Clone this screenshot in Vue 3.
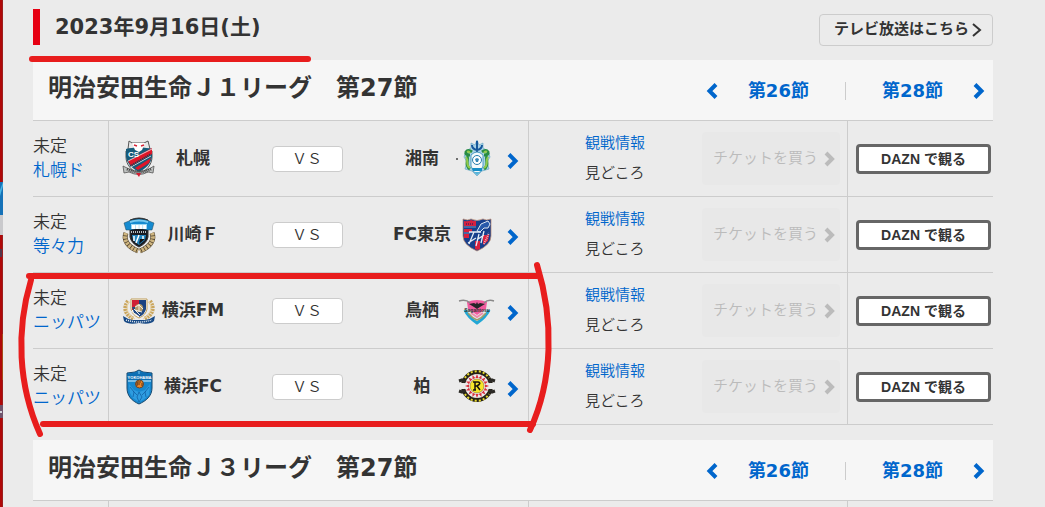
<script setup>
const matches = [
  { stadium: '札幌ド', home: '札幌', away: '湘南', homeCrest: 'sapporo', awayCrest: 'shonan' },
  { stadium: '等々力', home: '川崎Ｆ', away: 'FC東京', homeCrest: 'kawasaki', awayCrest: 'tokyo' },
  { stadium: 'ニッパツ', home: '横浜FM', away: '鳥栖', homeCrest: 'marinos', awayCrest: 'tosu' },
  { stadium: 'ニッパツ', home: '横浜FC', away: '柏', homeCrest: 'yokohamafc', awayCrest: 'kashiwa' }
]
const leagues = [
  { title: '明治安田生命Ｊ１リーグ　第27節', matches },
  { title: '明治安田生命Ｊ３リーグ　第27節', matches: [] }
]
const rays = Array.from({ length: 16 }, (_, i) => i * 22.5)
</script>

<template>
  <div class="page">
    <svg class="edge" width="3" height="507" aria-hidden="true">
      <rect width="3" height="507" fill="#9b1f1f" />
      <rect width="2" height="507" fill="#b00808" />
      <rect y="182" width="3" height="33" fill="#1672b8" />
      <path d="M0 190 3 182V186L0 196Z" fill="#48b4e4" />
      <rect y="215" width="3" height="20" fill="#c9c9cc" />
      <rect y="249" width="2" height="8" fill="#54354a" />
      <rect x="2" y="334" width="1" height="46" fill="#a34a18" />
      <rect y="405" width="3" height="13" fill="#70556d" />
      <rect y="411" width="2" height="2" fill="#d5d5de" />
    </svg>

    <main class="content">
      <header class="day">
        <h1>2023年9月16日(土)</h1>
        <a class="tv" href="#tv">
          <span>テレビ放送はこちら</span>
          <svg width="11" height="16" viewBox="0 0 11 16" aria-hidden="true"><path d="M2 2 9 8 2 14" fill="none" stroke="currentColor" stroke-width="2" /></svg>
        </a>
      </header>

      <section v-for="league in leagues" :key="league.title" class="league">
        <div class="bar">
          <h2>{{ league.title }}</h2>
          <nav>
            <a class="prev" href="#26">
              <svg width="12" height="16" viewBox="0 0 12 16" aria-hidden="true"><path d="M10 1.500 3.500 8 10 14.500" fill="none" stroke="currentColor" stroke-width="4" /></svg>
              <span>第26節</span>
            </a>
            <a class="next" href="#28">
              <span>第28節</span>
              <svg width="12" height="16" viewBox="0 0 12 16" aria-hidden="true"><path d="M2 1.500 8.500 8 2 14.500" fill="none" stroke="currentColor" stroke-width="4" /></svg>
            </a>
          </nav>
        </div>

        <table>
          <colgroup><col class="c-place" /><col /><col class="c-info" /><col class="c-dazn" /></colgroup>
          <tbody>
            <tr v-for="m in league.matches" :key="m.home">
              <td class="place">未定<br /><a href="#stadium">{{ m.stadium }}</a></td>
              <td>
                <div class="match">
                  <template v-for="side in ['home', 'away']" :key="side">
                    <svg class="crest" :class="side" width="36" height="38" viewBox="0 0 36 38" aria-hidden="true">
                      <g v-if="m[side + 'Crest'] === 'sapporo'">
                        <path d="M8 1 11 3H23L27 1 29 9 31 11V17C31 25 25 31 18 34C11 31 5 25 5 17V11L7 9Z" fill="#e7e9e9" stroke="#555" />
                        <path d="M5 9C11 7 25 7 31 9V17C30 23 26 28 18 32C10 28 6 23 5 17Z" fill="#175b79" />
                        <path d="M11 3H24L21 10 18 12 14 10Z" fill="#fff" />
                        <path d="M13 5 16 6M23 5 20 6" stroke="#d82436" stroke-width="1.500" />
                        <path d="M31 8V14L10 26 7 21Z" fill="#df1628" />
                        <path d="M30 18 28 23 17 30 14 28Z" fill="#df1628" />
                        <path d="M7 21 31 9M10 27 30 16" stroke="#e8eef0" stroke-width="0.800" />
                        <path d="M9 26 30 14" stroke="#1a4153" stroke-width="2" stroke-dasharray="1 1" />
                        <text x="7" y="17" font-size="8" font-weight="700" font-family="Liberation Sans, sans-serif" fill="#fff">CS</text>
                        <path d="M2 26 8 29Q18 34 28 29L33 26 32 33 27 32Q18 37 8 32L3 33Z" fill="#bfc2c1" stroke="#555" stroke-width="0.800" />
                        <path d="M6 29Q18 35 30 29" fill="none" stroke="#424242" stroke-width="3" stroke-dasharray="1 1" />
                        <path d="M15 33H20L18 37Z" fill="#d61c31" />
                      </g>
                      <g v-else-if="m[side + 'Crest'] === 'kawasaki'">
                        <path d="M5 17C2 24 7 31 17 35M31 17C34 24 29 31 19 35" fill="none" stroke="#4d402c" stroke-width="5" />
                        <path d="M5 17C2 24 7 31 17 35M31 17C34 24 29 31 19 35" fill="none" stroke="#ceb580" stroke-width="4" stroke-dasharray="2.500 0.800" />
                        <path d="M9 4Q18 0 27 4V21Q26 27 18 31Q10 27 9 21Z" fill="#191b22" stroke="#333" />
                        <path d="M3 7 8 5Q18 1 28 5L33 7 31 14H26L18 12 10 14H5Z" fill="#168bd0" stroke="#204455" stroke-width="0.500" />
                        <path d="M9 6Q18 3 27 6" fill="none" stroke="#79c9ee" stroke-width="2" />
                        <path d="M10 8H26V13H10Z" fill="#9bd7f2" /><path d="M11 11H25" stroke="#fff" stroke-width="4" stroke-dasharray="3 0.700" />
                        <path d="M10 16H26" stroke="#b7bec2" stroke-width="2" stroke-dasharray="1 1" />
                        <path d="M11 19H25L24 24 18 29 12 24Z" fill="#2385bf" />
                        <path d="M13 20V25M18 19 15 27M22 20V23" stroke="#fff" stroke-width="1.500" />
                        <path d="M19 23H24L18 28Z" fill="#111" />
                      </g>
                      <g v-else-if="m[side + 'Crest'] === 'marinos'">
                        <path d="M7 9C2 16 4 23 13 27M29 9C34 16 32 23 23 27" fill="none" stroke="#caa65e" stroke-width="4" stroke-dasharray="2 0.800" />
                        <path d="M8 9C4 17 7 23 14 27M28 9C32 17 29 23 22 27" fill="none" stroke="#ead5a5" stroke-width="1" />
                        <path d="M10 7H26V17Q25 23 18 26Q11 23 10 17Z" fill="#fff" stroke="#be9d58" stroke-width="1" />
                        <path d="M11 8H18V17L11 18Z" fill="#cf2036" /><path d="M18 8H25V17Q24 22 18 25Z" fill="#194282" />
                        <path d="M11 15H25L22 22 18 24 13 21Z" fill="#234b83" />
                        <circle cx="18" cy="16" r="4" fill="#b49c6b" /><path d="M14 15 18 13 22 17M18 12V20M14 18 21 20" stroke="#f5eee1" fill="none" />
                        <path d="M10 19 17 24M13 17 19 23" stroke="#eee" stroke-width="1" />
                        <path d="M2 24Q6 27 12 28H24Q30 27 34 24L33 29Q29 33 18 31Q7 33 3 29Z" fill="#174985" />
                        <path d="M5 28Q18 32 31 28" stroke="#e7edf2" stroke-width="1.500" stroke-dasharray="1 1" fill="none" />
                      </g>
                      <g v-else-if="m[side + 'Crest'] === 'yokohamafc'">
                        <path d="M6 5 14 4 18 2 22 4 31 5V20C31 28 25 33 18 36C11 33 6 28 6 20Z" fill="#1688cf" stroke="#16476d" />
                        <path d="M7 6Q18 2 30 6V12H7Z" fill="#0c6fb4" /><path d="M18 3V6" stroke="#86c8f0" />
                        <text x="18.500" y="11" text-anchor="middle" font-size="4" font-weight="700" font-family="Liberation Sans, sans-serif" fill="#fff">YOKOHAMA</text>
                        <path d="M7 13H30" stroke="#d8f1ff" />
                        <path d="M8 16 13 22 18 24 24 22 29 16 28 27 22 32 18 34 12 30 9 25Z" fill="#2e9ce0" />
                        <path d="M9 19 13 24 12 29M28 19 24 24 25 29M18 24 16 29 18 34 21 29ZM25 23 21 27M12 23 16 27" fill="none" stroke="#1262a6" stroke-width="0.800" />
                        <circle cx="18.500" cy="16" r="4" fill="#ee8524" stroke="#62432c" /><path d="M16 14H20M16 14V18M16 16H19M21 15V18" stroke="#5c3821" fill="none" />
                      </g>
                      <g v-else-if="m[side + 'Crest'] === 'shonan'">
                        <circle cx="-2" cy="19" r="1" fill="#444" />
                        <path d="M18 0 20 5 24 3 24 8 29 11 31 17 28 22 30 29 23 31 18 36 13 31 6 29 8 22 5 17 7 11 12 8V3L16 5Z" fill="#a9d2e6" stroke="#6aa9c7" stroke-width="0.700" />
                        <path d="M18 1V12M13 5Q13 9 18 10Q23 9 23 5" fill="none" stroke="#15589b" stroke-width="2" />
                        <path d="M11 15Q6 15 7 12Q9 9 13 12M25 15Q30 15 29 12Q27 9 23 12M8 16C10 20 5 25 11 29M28 16C26 20 31 25 25 29" fill="none" stroke="#278c44" stroke-width="3" />
                        <path d="M8 12Q10 11 11 13M28 12Q26 11 25 13M7 17C10 21 6 25 11 28M29 17C26 21 30 25 25 28" fill="none" stroke="#91c94b" stroke-width="2" />
                        <path d="M12 15Q18 9 24 15V26Q22 33 18 34Q14 33 12 26Z" fill="#f4fafc" stroke="#4d9bc2" />
                        <circle cx="18" cy="20" r="4.500" fill="#fff" stroke="#267dac" /><path d="M18 18 20 19 19 22H17L16 19Z" fill="#3487b6" />
                        <path d="M13 28H23V31H14Z" fill="#168ec6" /><path d="M15 32H21L18 35Z" fill="#55b5dc" />
                      </g>
                      <g v-else-if="m[side + 'Crest'] === 'tokyo'">
                        <path d="M4 3Q9 5 12 3Q18 6 24 3Q27 5 32 3V20Q32 29 18 35Q4 29 4 20Z" fill="#173f8c" stroke="#b7856d" stroke-width="0.700" />
                        <path d="M5 5Q9 6 12 4Q14 5 17 5V10H5ZM5 13H13V16H5ZM5 18H10V22H5ZM16 25H21V33L18 34 16 33ZM24 19H30L29 25 24 29Z" fill="#d7213f" />
                        <path d="M7 8H15" stroke="#701d55" stroke-width="2" stroke-dasharray="1 1" />
                        <path d="M5 11H17M5 17H11" stroke="#dce5f2" stroke-width="0.500" />
                        <path d="M18 15 22 8 29 5 31 8 29 12H25L21 16Z" fill="#285aaa" stroke="#dce7f2" />
                        <path d="M10 16H22M15 16 10 28M9 27 17 22M20 18 17 30M19 23 25 19M25 15 22 27" fill="none" stroke="#e5edf6" stroke-width="1.300" />
                        <path d="M25 28 30 17" stroke="#f3b2bd" stroke-width="2" stroke-dasharray="1 1" />
                      </g>
                      <g v-else-if="m[side + 'Crest'] === 'tosu'">
                        <path d="M4 11Q18 4 32 11 30 21 25 26L18 32 11 26Q6 21 4 11Z" fill="#e6e9e7" />
                        <path d="M6 18Q9 25 18 31Q27 25 30 18" fill="none" stroke="#22a7d5" stroke-width="3" />
                        <path d="M8 10Q18 6 28 10L27 17 18 23 9 17Z" fill="#f15b9e" />
                        <path d="M9 21Q13 26 18 28Q23 26 27 21" fill="none" stroke="#a09b69" stroke-width="1.500" />
                        <path d="M12 21 18 25 24 21" fill="none" stroke="#ef89ae" stroke-width="2" />
                        <path d="M0 9Q7 7 11 11M25 11Q29 7 35 9" fill="none" stroke="#898989" stroke-width="1.500" />
                        <path d="M10 12 15 11 17 12 18 10 19 12 21 11 26 12 21 15 18 17 15 15Z" fill="#272529" />
                        <text x="18" y="20" text-anchor="middle" font-size="5" font-weight="700" font-family="Liberation Sans, sans-serif" fill="#333">Sagantosu</text>
                      </g>
                      <g v-else>
                        <circle cx="18" cy="18" r="14" fill="none" stroke="#252217" stroke-width="4" />
                        <path d="M6 10A14 14 0 0 1 30 10M6 26A14 14 0 0 0 30 26" fill="none" stroke="#e5d72f" stroke-width="2" stroke-dasharray="2 2" />
                        <path d="M0 15H36V21H0Z" fill="#ebebeb" />
                        <g fill="#d72f3b"><path v-for="angle in rays" :key="angle" d="M16.500 10 18 6 19.500 10Z" :transform="`rotate(${angle} 18 18)`" /></g>
                        <circle cx="18" cy="18" r="7" fill="#f5e629" stroke="#76501f" stroke-width="0.500" />
                        <path d="M14 14H19Q23 15 18 18L21 22M16 14V22M14 22H17M16 18H18" fill="none" stroke="#17140b" stroke-width="1.500" />
                        <path d="M0 13 3 12 6 14M0 23 3 24 6 22M36 13 33 12 30 14M36 23 33 24 30 22" fill="none" stroke="#2b2925" stroke-width="3" />
                      </g>
                    </svg>
                    <strong class="team" :class="side">{{ m[side] }}</strong>
                  </template>
                  <button class="vs" type="button">ＶＳ</button>
                  <a class="more" href="#match" aria-label="試合詳細">
                    <svg width="12" height="16" viewBox="0 0 12 16" aria-hidden="true"><path d="M2 1.500 8.500 8 2 14.500" fill="none" stroke="currentColor" stroke-width="4" /></svg>
                  </a>
                </div>
              </td>
              <td>
                <div class="info">
                  <div class="links"><a href="#info">観戦情報</a><span>見どころ</span></div>
                  <button class="ticket" type="button" disabled>
                    <span>チケットを買う</span>
                    <svg width="11" height="16" viewBox="0 0 11 16" aria-hidden="true"><path d="M2 2 8 8 2 14" fill="none" stroke="currentColor" stroke-width="4" /></svg>
                  </button>
                </div>
              </td>
              <td class="watch"><button class="dazn" type="button">DAZN で観る</button></td>
            </tr>
            <tr v-if="!league.matches.length" class="blank"><td></td><td></td><td></td><td></td></tr>
          </tbody>
        </table>
      </section>
    </main>

    <svg class="marks" width="560" height="440" viewBox="0 0 560 440" aria-hidden="true">
      <g fill="none" stroke="#e81d1d" stroke-width="6" stroke-linecap="round" stroke-linejoin="round">
        <path d="M32 59H308" />
        <path d="M29 276H537" />
        <path d="M31 280C16 330 18 385 40 434" />
        <path d="M43 424H533" />
        <path d="M537 265C554 320 553 380 530 430" />
      </g>
    </svg>
  </div>
</template>

<style>
body { margin: 0; background: #ebebeb; }
</style>

<style scoped>
.page {
  position: relative;
  overflow: hidden;
  color: #333;
  font-family: "DejaVu Sans", "Noto Sans CJK JP", sans-serif;
  font-weight: 350;
}
.edge { position: absolute; left: 0; top: 0; }
.marks { position: absolute; left: 0; top: 0; pointer-events: none; }
.content { padding: 9px 52px 0 33px; }
a { color: #06c; text-decoration: none; }
button { box-sizing: border-box; padding: 0; color: inherit; font-family: inherit; font-weight: inherit; }
h1, h2 { margin: 0; font-weight: 700; }
.day { display: flex; justify-content: space-between; align-items: flex-start; margin-bottom: 14px; }
h1 { border-left: 7px solid #e60012; padding-left: 15px; font-size: 21px; line-height: 36px; }
.tv {
  display: flex;
  align-items: center;
  gap: 2px;
  margin-top: 5px;
  padding: 0 10px 0 14px;
  border: 1px solid #ccc;
  border-radius: 4px;
  color: #333;
  font-size: 15px;
  font-weight: 700;
}
.tv span { line-height: 28px; padding-bottom: 2px; }
.league { margin-bottom: 15px; }
.league:last-child { margin-bottom: 0; }
.bar {
  display: flex;
  justify-content: space-between;
  padding: 0 8px 0 15px;
  background: #f6f6f6;
  border-bottom: 1px solid #ccc;
}
h2 { font-size: 24px; line-height: 56px; }
nav { display: flex; align-items: center; padding-top: 2px; font-size: 18px; font-weight: 700; line-height: 58px; }
nav a { display: flex; align-items: center; }
.prev { gap: 30px; }
.prev::after { content: ""; width: 1px; height: 18px; margin-left: 6px; background: #ccc; }
.next { gap: 30px; padding-left: 36px; }
table { width: 100%; table-layout: fixed; border-spacing: 0; }
.c-place { width: 76px; }
.c-info { width: 319px; }
.c-dazn { width: 145px; }
td { box-sizing: border-box; height: 76px; padding: 0; border-right: 1px solid #ccc; border-bottom: 1px solid #ccc; }
td:last-child { border-right: 0; }
.blank td { height: 6px; border-bottom: 0; }
.place { padding-bottom: 2px; font-size: 17px; line-height: 24px; white-space: nowrap; }
.match {
  display: grid;
  grid-template-columns: 36px 72px 1fr 74px 36px 24px;
  align-items: center;
  padding: 0 9px 0 12px;
}
.match > * { grid-row: 1; }
.crest { overflow: visible; }
.crest.home { grid-column: 1; }
.crest.away { grid-column: 5; }
.team {
  padding-bottom: 2px;
  font-size: 17px;
  font-weight: 700;
  line-height: 24px;
  text-align: center;
  white-space: nowrap;
}
.team.home { grid-column: 2; }
.team.away { grid-column: 4; }
.vs {
  grid-column: 3;
  justify-self: center;
  width: 71px;
  height: 26px;
  border: 1px solid #ccc;
  border-radius: 4px;
  background: #fff;
  font-size: 15px;
  line-height: 20px;
}
.more { grid-column: 6; display: flex; margin-left: 12px; padding-top: 4px; }
.info { display: flex; justify-content: space-between; align-items: center; padding: 0 7px 0 56px; font-size: 15px; }
.links { display: flex; flex-direction: column; padding-bottom: 2px; line-height: 30px; }
.ticket {
  display: flex;
  align-items: center;
  justify-content: space-between;
  width: 138px;
  height: 53px;
  padding: 0 5px 0 11px;
  border: 0;
  border-radius: 4px;
  background: #e8e8e8;
  color: #bbb;
  font-size: 15px;
}
.ticket span { padding-bottom: 4px; }
.watch { padding: 0 2px 0 8px; }
.dazn {
  display: block;
  width: 100%;
  height: 30px;
  padding-bottom: 2px;
  border: 3px solid #666;
  border-radius: 4px;
  background: #fff;
  font-family: "Liberation Sans", "Noto Sans CJK JP", sans-serif;
  font-size: 14px;
  font-weight: 700;
}
</style>
